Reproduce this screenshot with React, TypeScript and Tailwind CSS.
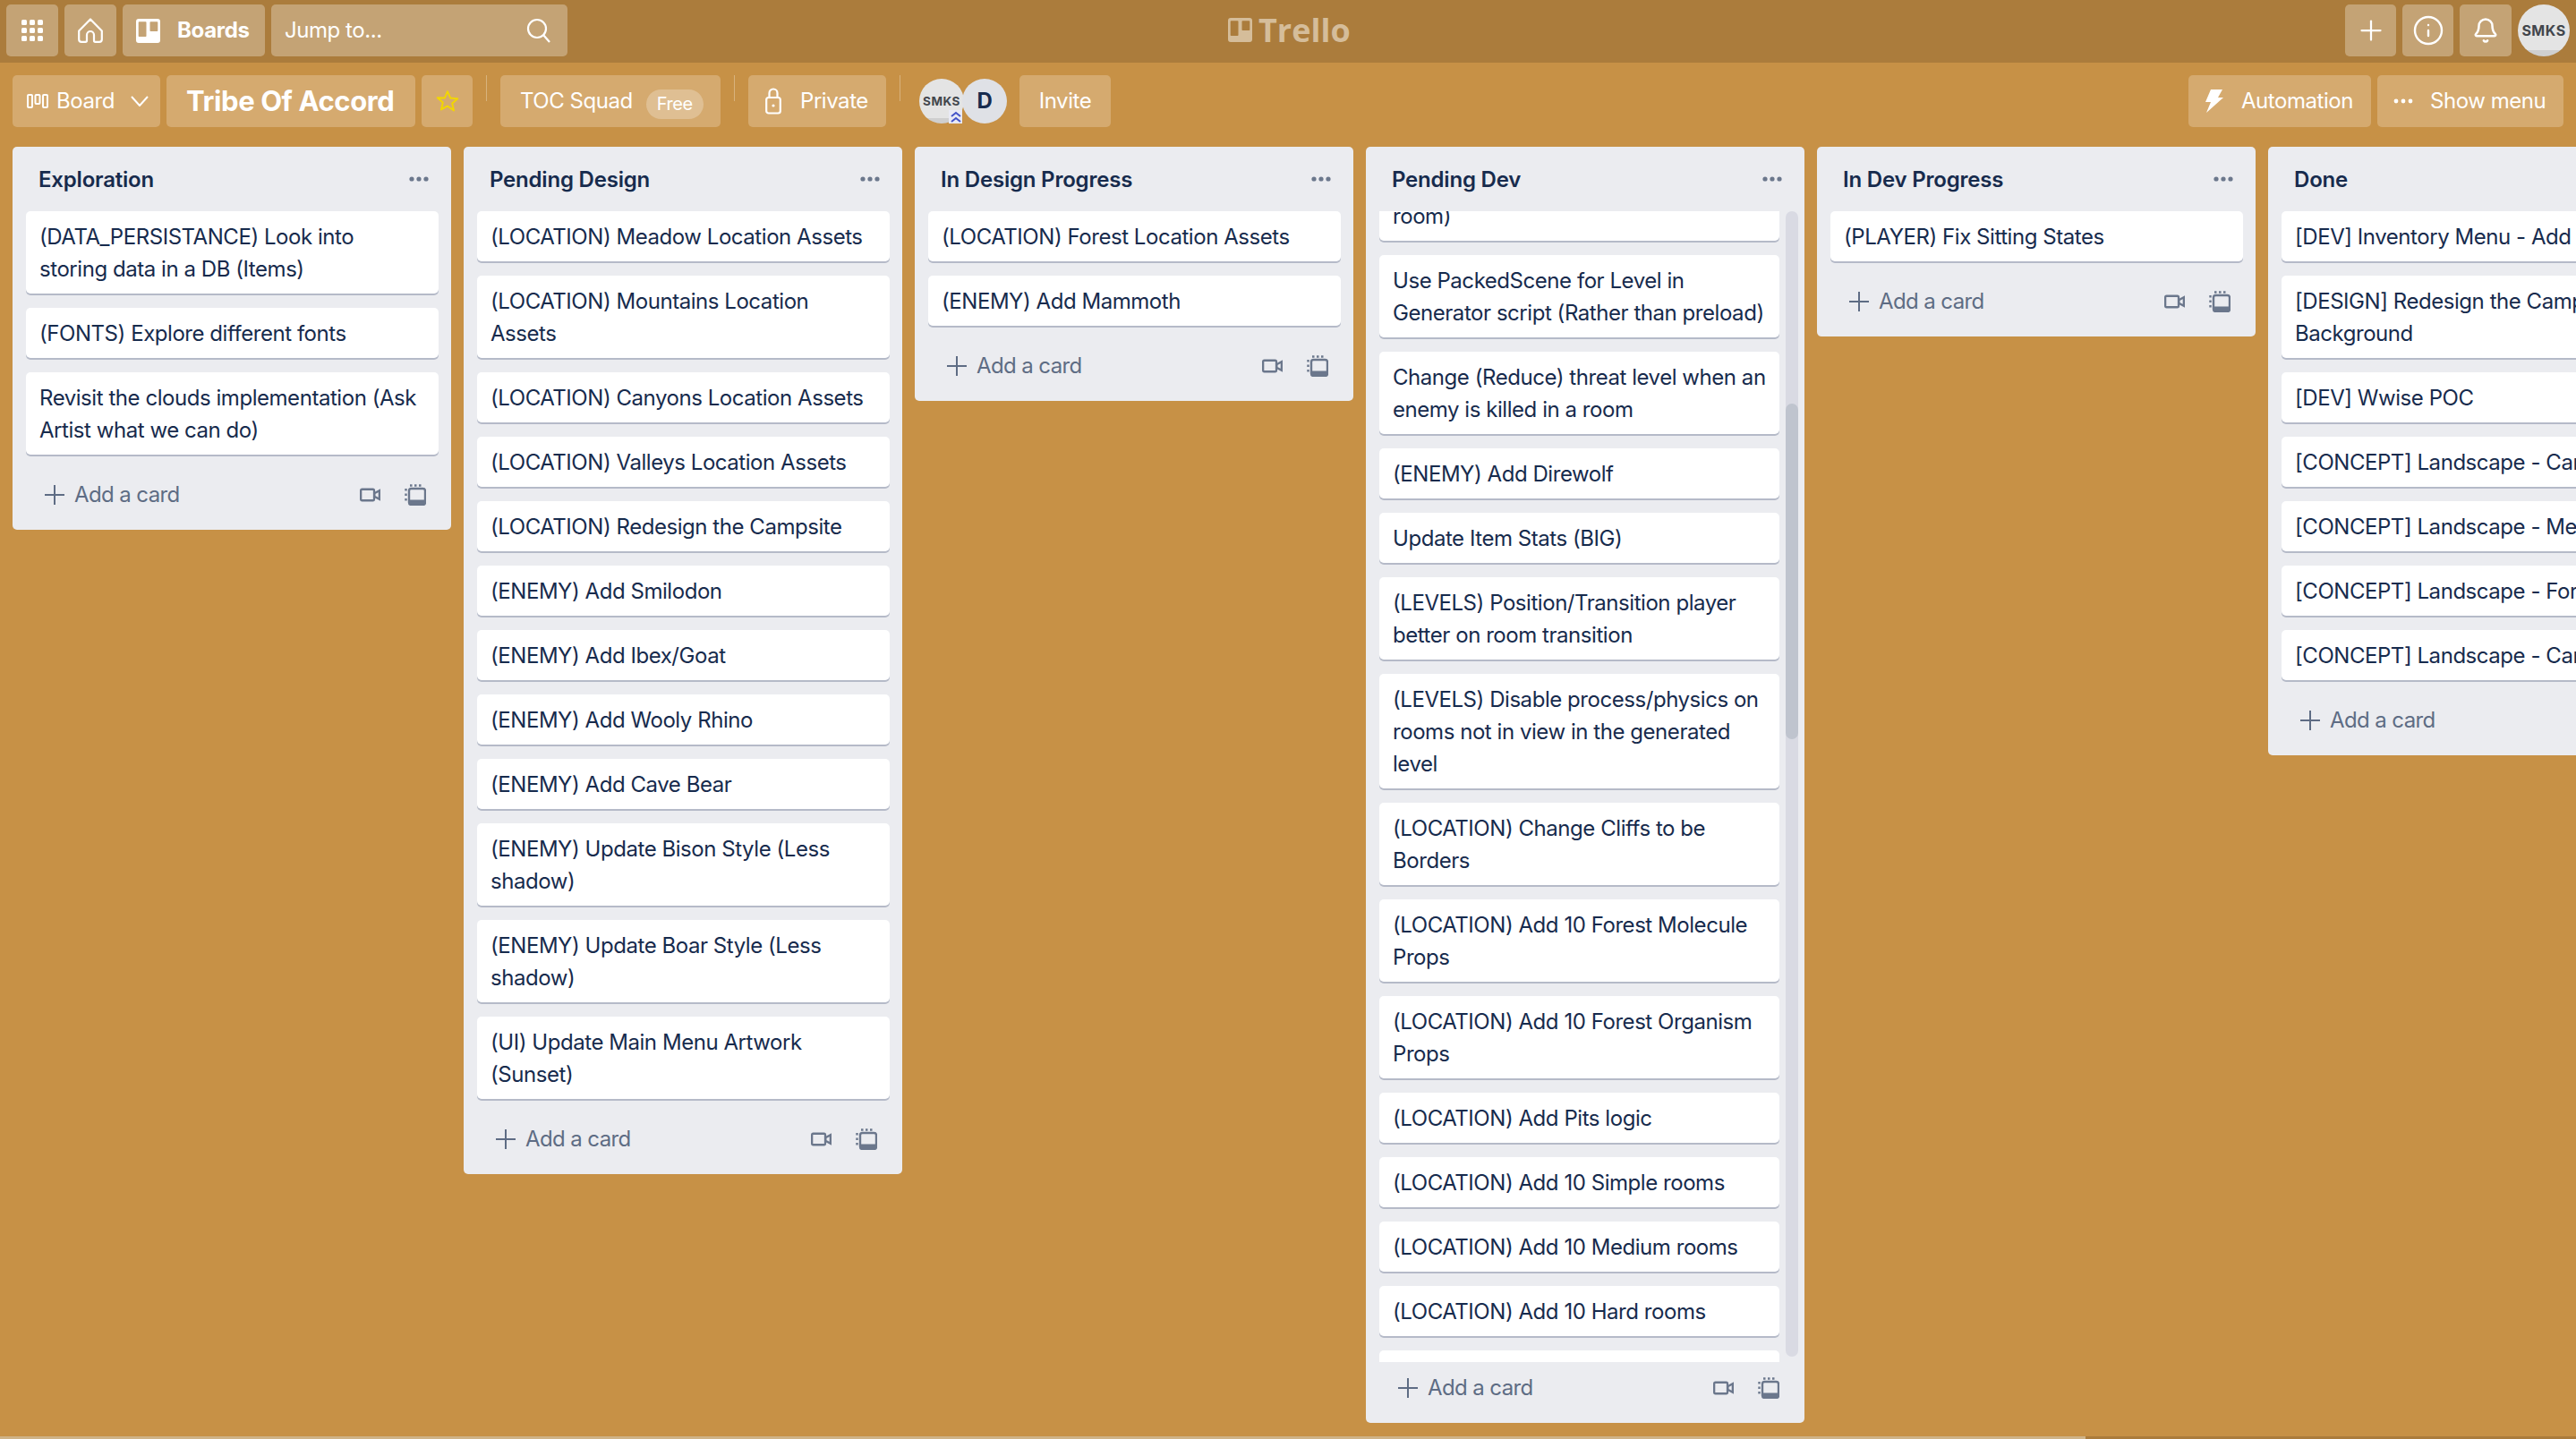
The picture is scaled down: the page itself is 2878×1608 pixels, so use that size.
import React from 'react';
import { Bell, Info, Plus } from 'lucide-react';

interface BoardList {
  title: string;
  cards: string[];
}

const lists: BoardList[] = [
  {
    title: 'Exploration',
    cards: [
      '(DATA_PERSISTANCE) Look into storing data in a DB (Items)',
      '(FONTS) Explore different fonts',
      'Revisit the clouds implementation (Ask Artist what we can do)',
    ],
  },
  {
    title: 'Pending Design',
    cards: [
      '(LOCATION) Meadow Location Assets',
      '(LOCATION) Mountains Location Assets',
      '(LOCATION) Canyons Location Assets',
      '(LOCATION) Valleys Location Assets',
      '(LOCATION) Redesign the Campsite',
      '(ENEMY) Add Smilodon',
      '(ENEMY) Add Ibex/Goat',
      '(ENEMY) Add Wooly Rhino',
      '(ENEMY) Add Cave Bear',
      '(ENEMY) Update Bison Style (Less shadow)',
      '(ENEMY) Update Boar Style (Less shadow)',
      '(UI) Update Main Menu Artwork (Sunset)',
    ],
  },
  {
    title: 'In Design Progress',
    cards: ['(LOCATION) Forest Location Assets', '(ENEMY) Add Mammoth'],
  },
];

const pendingDevCards = [
  'Use PackedScene for Level in Generator script (Rather than preload)',
  'Change (Reduce) threat level when an enemy is killed in a room',
  '(ENEMY) Add Direwolf',
  'Update Item Stats (BIG)',
  '(LEVELS) Position/Transition player better on room transition',
  '(LEVELS) Disable process/physics on rooms not in view in the generated level',
  '(LOCATION) Change Cliffs to be Borders',
  '(LOCATION) Add 10 Forest Molecule Props',
  '(LOCATION) Add 10 Forest Organism Props',
  '(LOCATION) Add Pits logic',
  '(LOCATION) Add 10 Simple rooms',
  '(LOCATION) Add 10 Medium rooms',
  '(LOCATION) Add 10 Hard rooms',
];

const lastLists: BoardList[] = [
  { title: 'In Dev Progress', cards: ['(PLAYER) Fix Sitting States'] },
  {
    title: 'Done',
    cards: [
      '[DEV] Inventory Menu - Add Items',
      '[DESIGN] Redesign the Campsite Background',
      '[DEV] Wwise POC',
      '[CONCEPT] Landscape - Canyons',
      '[CONCEPT] Landscape - Meadow',
      '[CONCEPT] Landscape - Forest',
      '[CONCEPT] Landscape - Canyons',
    ],
  },
];

const TrelloMark = ({ className }: { className: string }) => (
  <svg viewBox="0 0 27 27" className={className} fill="currentColor">
    <path
      fillRule="evenodd"
      d="M3 0h21a3 3 0 0 1 3 3v21a3 3 0 0 1-3 3H3a3 3 0 0 1-3-3V3a3 3 0 0 1 3-3Zm.5 3.2a.8.8 0 0 0-.8.8v15.2a.8.8 0 0 0 .8.8h7.2a.8.8 0 0 0 .8-.8V4a.8.8 0 0 0-.8-.8Zm12.8 0a.8.8 0 0 0-.8.8v9.2a.8.8 0 0 0 .8.8h7.2a.8.8 0 0 0 .8-.8V4a.8.8 0 0 0-.8-.8Z"
    />
  </svg>
);

const TemplateIcon = () => (
  <svg viewBox="0 0 24 24" className="h-[24px] w-[24px]" fill="none" stroke="#6b778c" strokeWidth="2.4">
    <path d="M6 1.5h2.5M11 1.5h2.5M16 1.5h2.5" />
    <path d="M1.5 5v2.5M1.5 10.5V13M1.5 16v2.5" />
    <rect x="5" y="5" width="18" height="18" rx="2.5" />
    <path d="M5 17.5h18v3a2.5 2.5 0 0 1-2.5 2.5h-13A2.5 2.5 0 0 1 5 20.5Z" fill="#6b778c" stroke="none" />
  </svg>
);

const VideoIcon = () => (
  <svg viewBox="0 0 24 16" className="h-[16px] w-[23px]" fill="none" stroke="#6b778c" strokeWidth="2.4">
    <rect x="1.2" y="1.5" width="15.5" height="13" rx="1.5" />
    <path d="M17 6.2 22.8 3v10L17 9.8Z" />
  </svg>
);

const ListFooter = () => (
  <div className="mb-[10px] flex h-[58px] shrink-0 items-center justify-between pl-[36px] pr-[28px] text-[#5e6c84]">
    <div className="flex items-center gap-[11px]">
      <svg viewBox="0 0 22 22" className="h-[22px] w-[22px]" stroke="currentColor" strokeWidth="2">
        <path d="M11 0v22M0 11h22" />
      </svg>
      <span className="tracking-[-0.6px]">Add a card</span>
    </div>
    <div className="flex items-center gap-[27px]">
      <VideoIcon />
      <TemplateIcon />
    </div>
  </div>
);

const ListHeader = ({ title }: { title: string }) => (
  <div className="flex h-[72px] shrink-0 items-center justify-between pl-[29px] pr-[25px]">
    <h2 className="pt-[2px] font-semibold tracking-[-0.2px]">{title}</h2>
    <svg viewBox="0 0 22 6" className="h-[6px] w-[22px]" fill="#6b778c">
      <circle cx="3" cy="3" r="2.6" />
      <circle cx="11" cy="3" r="2.6" />
      <circle cx="19" cy="3" r="2.6" />
    </svg>
  </div>
);

const Card = ({ text, className = '' }: { text: string; className?: string }) => (
  <div className={`mb-[16px] rounded-[5px] bg-white px-[15px] pb-[9px] pt-[11px] shadow-[0_2px_0_#b5bac8] ${className}`}>
    {text}
  </div>
);

const List = ({ list }: { list: BoardList }) => (
  <section className="w-[490px] shrink-0 self-start rounded-[5px] bg-[#ebecf0]">
    <ListHeader title={list.title} />
    <div className="pl-[15px] pr-[14px]">
      {list.cards.map((card, index) => (
        <Card key={index} text={card} />
      ))}
    </div>
    <ListFooter />
  </section>
);

const PendingDevList = () => (
  <section className="flex h-[1426px] w-[490px] shrink-0 flex-col self-start rounded-[5px] bg-[#ebecf0]">
    <ListHeader title="Pending Dev" />
    <div className="relative min-h-0 flex-1 overflow-hidden pl-[15px]">
      <div className="w-[447px]">
        <Card text="room)" className="-mt-[23px]" />
        {pendingDevCards.map((card, index) => (
          <Card key={index} text={card} />
        ))}
        <div className="h-[60px] rounded-[5px] bg-white" />
      </div>
      {/* fake scrollbar */}
      <div className="absolute right-[7px] top-0 h-[1280px] w-[14px] rounded-[7px] bg-[#d9dae3]">
        <div className="absolute left-0 top-[215px] h-[375px] w-[14px] rounded-[7px] bg-[#bfc4ce]" />
      </div>
    </div>
    <ListFooter />
  </section>
);

const HeaderButton = ({ children, className = '' }: { children: React.ReactNode; className?: string }) => (
  <div className={`flex h-[58px] items-center rounded-[5px] bg-[#c4a375] ${className}`}>{children}</div>
);

const BarButton = ({ children, className = '' }: { children: React.ReactNode; className?: string }) => (
  <div className={`flex h-[58px] shrink-0 items-center rounded-[5px] bg-[#d5aa6f] ${className}`}>{children}</div>
);

const Divider = () => <div className="mx-[15px] h-[29px] w-px shrink-0 bg-white/30" />;

const SmksAvatar = ({ className }: { className: string }) => (
  <div
    className={`flex items-center justify-center rounded-full bg-[linear-gradient(#e4e4e4_88%,#cfcfcf_88%)] font-bold tracking-[0.5px] text-[#42464c] ${className}`}
  >
    SMKS
  </div>
);

export default function App() {
  return (
    <div className="relative flex h-[1608px] w-[2878px] flex-col overflow-hidden bg-[#c79146] font-['Inter',sans-serif] text-[24px] leading-[36px] tracking-[-0.45px] text-[#172b4d]">
      {/* Top nav */}
      <header className="relative flex h-[70px] shrink-0 items-start gap-[7px] bg-[#ab7c3c] px-[7px] pt-[5px] text-white">
        <HeaderButton className="w-[58px] justify-center">
          <svg viewBox="0 0 24 24" className="h-[24px] w-[24px]" fill="currentColor">
            {[0, 9, 18].flatMap((y) =>
              [0, 9, 18].map((x) => <rect key={`${x}-${y}`} x={x} y={y} width="6" height="6" rx="1.5" />)
            )}
          </svg>
        </HeaderButton>
        <HeaderButton className="w-[58px] justify-center">
          <svg viewBox="0 0 28 28" className="h-[28px] w-[28px]" fill="none" stroke="currentColor" strokeWidth="2.2" strokeLinejoin="round">
            <path d="M14 1.5 1.2 14.5v9.5a2.8 2.8 0 0 0 2.8 2.8h4.5a1.5 1.5 0 0 0 1.5-1.5V19a4 4 0 0 1 8 0v6.3a1.5 1.5 0 0 0 1.5 1.5H24a2.8 2.8 0 0 0 2.8-2.8v-9.5Z" />
          </svg>
        </HeaderButton>
        <HeaderButton className="w-[159px] pl-[15px]">
          <TrelloMark className="h-[27px] w-[27px]" />
          <span className="ml-[19px] font-bold tracking-[-0.3px]">Boards</span>
        </HeaderButton>
        <HeaderButton className="w-[331px] justify-between pl-[15px] pr-[18px]">
          <span>Jump to...</span>
          <svg viewBox="0 0 28 28" className="h-[28px] w-[28px]" fill="none" stroke="currentColor" strokeWidth="2.2">
            <circle cx="12" cy="12" r="10" />
            <path d="m19 19 7 8" />
          </svg>
        </HeaderButton>

        <div className="absolute left-[1372px] top-[20px] flex items-center gap-[7px] text-[#d5bd9a]">
          <TrelloMark className="h-[27px] w-[27px]" />
          <span className="font-['Open_Sans',sans-serif] text-[36px] font-bold leading-[27px] tracking-normal">Trello</span>
        </div>

        <div className="ml-auto flex items-start gap-[7px]">
          <HeaderButton className="w-[57px] justify-center">
            <Plus size={36} strokeWidth={1.5} />
          </HeaderButton>
          <HeaderButton className="w-[57px] justify-center">
            <Info size={36} strokeWidth={1.6} />
          </HeaderButton>
          <HeaderButton className="w-[58px] justify-center">
            <Bell size={30} strokeWidth={2} />
          </HeaderButton>
          <SmksAvatar className="h-[58px] w-[58px] text-[16px]" />
        </div>
      </header>

      {/* Board bar */}
      <div className="flex h-[94px] shrink-0 items-start px-[14px] pt-[14px] text-white">
        <BarButton className="w-[165px] pl-[16px]">
          <svg viewBox="0 0 24 16" className="h-[16px] w-[24px]" fill="none" stroke="currentColor" strokeWidth="2">
            <rect x="1" y="1" width="5" height="14" rx="1" />
            <rect x="9.5" y="1" width="5" height="10" rx="1" />
            <rect x="18" y="1" width="5" height="14" rx="1" />
          </svg>
          <span className="ml-[9px]">Board</span>
          <svg viewBox="0 0 20 12" className="ml-[18px] h-[12px] w-[20px]" fill="none" stroke="currentColor" strokeWidth="2">
            <path d="m1 1 9 10 9-10" />
          </svg>
        </BarButton>
        <BarButton className="ml-[7px] w-[278px] pl-[22px]">
          <span className="text-[31px] font-bold tracking-[-0.4px]">Tribe Of Accord</span>
        </BarButton>
        <BarButton className="ml-[7px] w-[57px] justify-center">
          <svg viewBox="0 0 24 24" className="h-[26px] w-[26px]" fill="none" stroke="#f2d600" strokeWidth="1.8" strokeLinejoin="round">
            <path d="m12 2 3 6.8 7.4.7-5.6 4.9 1.7 7.3L12 17l-6.5 3.7 1.7-7.3-5.6-4.9L9 8.8Z" />
          </svg>
        </BarButton>
        <Divider />
        <BarButton className="w-[246px] pl-[22px]">
          <span>TOC Squad</span>
          <span className="ml-[15px] mt-[6px] flex h-[33px] w-[64px] items-center justify-center rounded-full bg-white/25 text-[20px]">
            Free
          </span>
        </BarButton>
        <Divider />
        <BarButton className="w-[154px] pl-[19px]">
          <svg viewBox="0 0 18 30" className="h-[30px] w-[18px]" fill="none" stroke="currentColor" strokeWidth="2.2">
            <rect x="1.2" y="11" width="15.6" height="17.5" rx="2.5" />
            <path d="M4.5 11V6a4.5 4.5 0 0 1 9 0v5" />
            <circle cx="9" cy="20" r="1.6" fill="currentColor" stroke="none" />
          </svg>
          <span className="ml-[21px]">Private</span>
        </BarButton>
        <Divider />
        <div className="relative ml-[6px] flex h-[58px] shrink-0 items-center">
          <SmksAvatar className="h-[50px] w-[50px] text-[13.5px]" />
          <div className="-ml-[2px] flex h-[50px] w-[50px] items-center justify-center rounded-full bg-[#dfe1e6] font-bold text-[#172b4d]">
            D
          </div>
          <div className="absolute left-[33px] top-[39px] flex h-[15px] w-[15px] items-center justify-center bg-[#e9eaf5]">
            <svg viewBox="0 0 14 14" className="h-[14px] w-[14px]" fill="none" stroke="#4353c8" strokeWidth="2">
              <path d="m2 6 5-4 5 4M2 12l5-4 5 4" />
            </svg>
          </div>
        </div>
        <BarButton className="ml-[14px] w-[102px] justify-center">Invite</BarButton>

        <BarButton className="ml-auto w-[204px] pl-[19px]">
          <svg viewBox="0 0 20 26" className="h-[26px] w-[20px]" fill="currentColor">
            <path d="M6 0h13l-5 9h6L1 26l5-12H0Z" />
          </svg>
          <span className="ml-[20px]">Automation</span>
        </BarButton>
        <BarButton className="ml-[7px] w-[208px] pl-[18px]">
          <svg viewBox="0 0 22 6" className="h-[6px] w-[22px]" fill="currentColor">
            <circle cx="3" cy="3" r="2.4" />
            <circle cx="11" cy="3" r="2.4" />
            <circle cx="19" cy="3" r="2.4" />
          </svg>
          <span className="ml-[19px]">Show menu</span>
        </BarButton>
      </div>

      {/* Lists */}
      <main className="flex min-h-0 flex-1 items-start gap-[14px] pl-[14px]">
        {lists.map((list) => (
          <List key={list.title} list={list} />
        ))}
        <PendingDevList />
        {lastLists.map((list) => (
          <List key={list.title} list={list} />
        ))}
      </main>

      {/* horizontal scrollbar */}
      <div className="flex h-[3px] shrink-0 bg-[#ab7c3c]">
        <div className="w-[2330px] bg-[#cfb387]" />
      </div>
    </div>
  );
}
